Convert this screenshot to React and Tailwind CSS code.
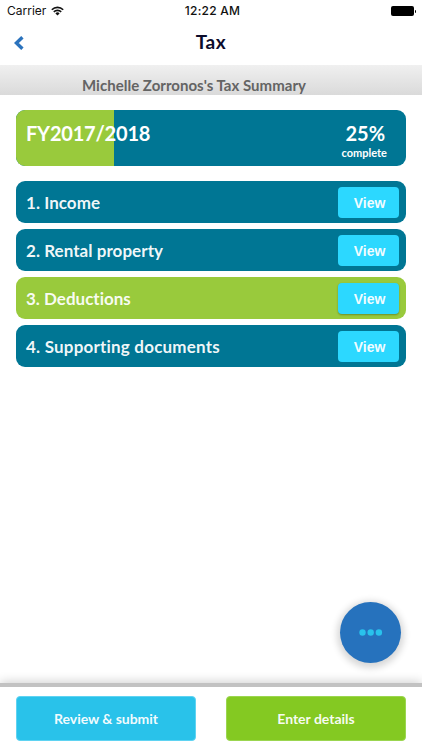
import React from 'react';

const sections = [
  { id: 1, title: '1. Income', tracking: 'tracking-[0.05px]', active: false },
  { id: 2, title: '2. Rental property', tracking: 'tracking-[0.05px]', active: false },
  { id: 3, title: '3. Deductions', tracking: 'tracking-normal', active: true },
  { id: 4, title: '4. Supporting documents', tracking: 'tracking-[0.2px]', active: false },
];

const StatusBar = () => (
  <div className="h-[22px] grid grid-cols-[1fr_auto_1fr] items-center pl-[7px] pr-[6px] font-['Inter',sans-serif] text-[12px] text-[#111]">
    <div className="flex items-center gap-[5px]">
      <span>Carrier</span>
      <svg width="13" height="10" viewBox="0 0 13 10" fill="none" stroke="#111" strokeWidth="1.6">
        <path d="M0.8 3.8a8 8 0 0 1 11.4 0" />
        <path d="M2.8 5.9a5.2 5.2 0 0 1 7.4 0" />
        <path d="M6.5 9.5L4.4 7.4a3 3 0 0 1 4.2 0z" fill="#111" stroke="none" />
      </svg>
    </div>
    <span className="font-medium tracking-[0.25px] pl-[2px]">12:22 AM</span>
    <div className="flex items-center justify-self-end gap-px">
      <div className="w-[23px] h-[10px] rounded-[2px] bg-black" />
      <div className="w-px h-[3px] rounded-r bg-black" />
    </div>
  </div>
);

const SectionRow = ({ title, tracking, active }) => (
  <li
    className={`h-[42px] rounded-[9px] flex items-center justify-between pl-[10px] pr-[7px] ${
      active ? 'bg-[#99ca3c]' : 'bg-[#007694]'
    }`}
  >
    <span className={`pt-[2px] text-[17px] font-bold text-white/95 ${tracking}`}>{title}</span>
    <button
      className={`w-[61px] h-[31px] pl-[2px] pt-[2px] rounded-[4px] bg-[#2cd8ff] font-['Liberation_Sans',sans-serif] text-[14px] font-bold text-white/95 ${
        active ? 'shadow-[0_1px_2px_rgba(0,0,0,0.3)]' : ''
      }`}
    >
      View
    </button>
  </li>
);

const App = () => {
  const progress = 25;

  return (
    <main className="relative w-full h-screen flex flex-col overflow-hidden bg-white font-['Lato',sans-serif] [font-variant-ligatures:none]">
      <StatusBar />

      <header className="h-[43px] grid grid-cols-[1fr_auto_1fr] items-center">
        <button className="pl-[14px] pb-[2px]" aria-label="Back">
          <svg width="10" height="14" viewBox="0 0 10 14" fill="none" stroke="#2b73bd" strokeWidth="3.4">
            <path d="M8.4 1.2L2.4 7l6 5.8" />
          </svg>
        </button>
        <h1 className="pb-[2px] text-[19px] font-bold tracking-[0.5px] text-[#0b0b2b]">Tax</h1>
      </header>

      <div className="h-[30px] pt-[10px] pl-[82px] bg-linear-to-b from-[#f0f0f0] to-[#dadada]">
        <h2 className="text-[15px] leading-[20px] font-bold tracking-[0.02px] text-[#646464] whitespace-nowrap">
          Michelle Zorronos's Tax Summary
        </h2>
      </div>

      <section className="flex-1 px-4 pt-[15px]">
        <div className="relative h-[56px] rounded-[9px] overflow-hidden bg-[#007694] text-white">
          <div className="absolute inset-y-0 left-0 bg-[#99ca3c]" style={{ width: `${progress}%` }} />
          <div className="relative flex justify-between pl-[10px] pr-[19px] pt-[10px]">
            <span className="text-[20px] leading-[26px] font-bold tracking-[-0.2px]">FY2017/2018</span>
            <div className="text-center">
              <div className="pl-[2px] text-[20px] leading-[26px] font-bold">{progress}%</div>
              <div className="text-[11px] leading-[13px] font-bold">complete</div>
            </div>
          </div>
        </div>

        <ul className="mt-[15px] flex flex-col gap-[6px]">
          {sections.map((s) => (
            <SectionRow key={s.id} title={s.title} tracking={s.tracking} active={s.active} />
          ))}
        </ul>
      </section>

      <button
        className="absolute left-[340px] top-[602px] size-[61px] rounded-full bg-[#2672bd] flex items-center justify-center shadow-[0_2px_7px_3px_rgba(0,0,0,0.16)]"
        aria-label="More"
      >
        <svg width="25" height="7" viewBox="0 0 25 7" fill="#29c2ec">
          <circle cx="4.5" cy="3.5" r="3.2" />
          <circle cx="12.7" cy="3.5" r="3.2" />
          <circle cx="20.9" cy="3.5" r="3.2" />
        </svg>
      </button>

      <footer className="h-[67px] border-t-4 border-[#c2c2c2] bg-white px-4 pt-[9px] flex justify-between shadow-[0_-1px_10px_rgba(0,0,0,0.2)]">
        <button className="w-[180px] h-[45px] rounded-[4px] border border-[#5fd3f2] bg-[#29c2ea] text-[14px] font-bold tracking-[-0.05px] text-white/95">
          Review &amp; submit
        </button>
        <button className="w-[180px] h-[45px] rounded-[4px] border border-[#9bd650] bg-[#84c922] text-[14px] font-bold text-white/95">
          Enter details
        </button>
      </footer>
    </main>
  );
};

export default App;
